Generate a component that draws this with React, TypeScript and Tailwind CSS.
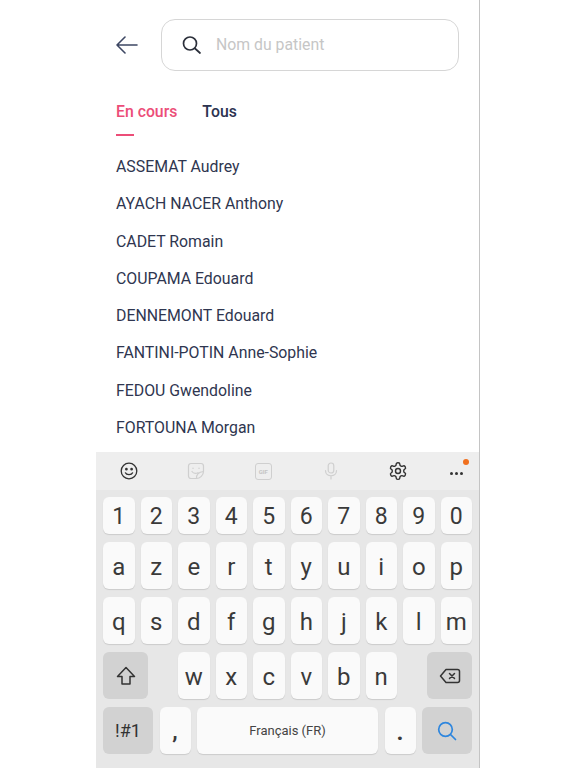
import React from 'react';

const names = [
  'ASSEMAT Audrey',
  'AYACH NACER Anthony',
  'CADET Romain',
  'COUPAMA Edouard',
  'DENNEMONT Edouard',
  'FANTINI-POTIN Anne-Sophie',
  'FEDOU Gwendoline',
  'FORTOUNA Morgan',
];

const Key = ({ label, className = '' }: { label: React.ReactNode; className?: string }) => (
  <div className={`flex justify-center rounded-[6px] bg-[#fafafa] text-[#3a3a3a] shadow-[0_1px_1px_rgba(0,0,0,0.12)] ${className}`}>
    {label}
  </div>
);

const ActionKey = ({ label, className = '' }: { label: React.ReactNode; className?: string }) => (
  <div className={`flex h-[47px] items-center justify-center rounded-[6px] bg-[#d2d2d2] text-[#333] ${className}`}>
    {label}
  </div>
);

const LetterRow = ({ keys }: { keys: string[] }) => (
  <div className="grid grid-cols-10 gap-x-[6px]">
    {keys.map(k => (
      <Key key={k} label={k} className="h-[47px] items-center pt-[2px] text-[24px]" />
    ))}
  </div>
);

const App: React.FC = () => {
  return (
    <div className="flex h-[768px] w-[576px] overflow-hidden bg-white font-['Roboto',sans-serif]">
      <div className="w-[96px] shrink-0" />
      <div className="flex h-full w-[384px] shrink-0 flex-col border-r border-[#c4c4c4]">
        {/* Search header */}
        <div className="flex items-center px-[20px] pt-[19px]">
          <svg width="24" height="20" viewBox="0 0 24 20" fill="none" stroke="#3d4763" strokeWidth="1.6" strokeLinecap="round" strokeLinejoin="round">
            <path d="M21 10H1M9 2l-8 8 8 8" />
          </svg>
          <div className="ml-[21px] flex h-[52px] flex-1 items-center rounded-[14px] border-[1.5px] border-[#d6d6d6] pl-[20px]">
            <svg width="20" height="20" viewBox="0 0 20 20" fill="none" stroke="#2b2f3a" strokeWidth="1.7" strokeLinecap="round">
              <circle cx="8" cy="8.500" r="6.500" />
              <path d="M13 13.500 18 18" />
            </svg>
            <span className="ml-[14px] text-[15.8px] text-[#c6c6c6]">Nom du patient</span>
          </div>
        </div>

        {/* Tabs */}
        <div className="flex gap-[25px] pl-[20px] pt-[30px]">
          <div className="flex flex-col">
            <span className="text-[15.800px] leading-[22px] font-medium text-[#ec4d78]">En cours</span>
            <div className="mt-[11px] h-[2px] w-[18px] bg-[#ec4d78]" />
          </div>
          <span className="text-[15.800px] leading-[22px] font-medium text-[#2c3350]">Tous</span>
        </div>

        {/* Patients */}
        <div className="flex flex-col gap-[15.300px] pl-[20px] pt-[20px]">
          {names.map(n => (
            <div key={n} className="text-[15.850px] leading-[22px] text-[#2f3650]">{n}</div>
          ))}
        </div>

        {/* Keyboard */}
        <div className="mt-auto h-[316px] bg-[#e7e7e7]">
          <div className="flex h-[38px] items-center bg-[#eeeeee]">
            <div className="flex w-[66px] justify-center">
              <svg width="18" height="18" viewBox="0 0 18 18" fill="none" stroke="#333" strokeWidth="1.300" strokeLinecap="round">
                <circle cx="9" cy="9" r="7.800" />
                <circle cx="6.400" cy="7.200" r=".7" fill="#333" />
                <circle cx="11.600" cy="7.200" r=".7" fill="#333" />
                <path d="M5.400 10.800c1 2.400 6.200 2.400 7.200 0" />
              </svg>
            </div>
            <div className="flex w-[67.500px] justify-center">
              <svg width="18" height="18" viewBox="0 0 18 18" fill="none" stroke="#cfcfcf" strokeWidth="1.200" strokeLinejoin="round" strokeLinecap="round">
                <path d="M4 1.500h10A2.500 2.500 0 0 1 16.500 4v5.500c0 3.500-3.500 7-7 7H4A2.500 2.500 0 0 1 1.500 14V4A2.500 2.500 0 0 1 4 1.500Z" />
                <path d="M5 9.500c1.200 1.800 3.500 2.200 6 1.200M9.500 16.500c-.5-3.500 2-6.500 7-7M6 6v.5M12 6v.5" />
              </svg>
            </div>
            <div className="flex w-[67.500px] justify-center">
              <div className="flex h-[17px] w-[17px] items-center justify-center rounded-[3px] border-[1.500px] border-[#cfcfcf] text-[6px] font-bold text-[#c4c4c4]">GIF</div>
            </div>
            <div className="flex w-[67.500px] justify-center">
              <svg width="14" height="18" viewBox="0 0 14 18" fill="none" stroke="#cfcfcf" strokeWidth="1.200" strokeLinecap="round">
                <rect x="4.200" y="1" width="5.600" height="10" rx="2.800" />
                <path d="M1.500 8.500c0 7 11 7 11 0M7 14.500V17" />
              </svg>
            </div>
            <div className="flex w-[67.500px] justify-center">
              <svg width="20" height="20" viewBox="0 0 24 24" fill="none" stroke="#333" strokeWidth="1.700" strokeLinecap="round" strokeLinejoin="round">
                <path d="M12.220 2h-.44a2 2 0 0 0-2 2v.18a2 2 0 0 1-1 1.730l-.43.250a2 2 0 0 1-2 0l-.15-.08a2 2 0 0 0-2.730.730l-.22.380a2 2 0 0 0 .730 2.730l.15.100a2 2 0 0 1 1 1.720v.510a2 2 0 0 1-1 1.740l-.15.090a2 2 0 0 0-.730 2.730l.22.380a2 2 0 0 0 2.730.730l.15-.08a2 2 0 0 1 2 0l.43.250a2 2 0 0 1 1 1.730V20a2 2 0 0 0 2 2h.44a2 2 0 0 0 2-2v-.18a2 2 0 0 1 1-1.730l.43-.250a2 2 0 0 1 2 0l.15.080a2 2 0 0 0 2.730-.730l.22-.390a2 2 0 0 0-.730-2.730l-.15-.080a2 2 0 0 1-1-1.740v-.500a2 2 0 0 1 1-1.740l.15-.090a2 2 0 0 0 .730-2.730l-.22-.380a2 2 0 0 0-2.730-.730l-.15.080a2 2 0 0 1-2 0l-.43-.250a2 2 0 0 1-1-1.730V4a2 2 0 0 0-2-2z" />
                <circle cx="12" cy="12" r="3" />
              </svg>
            </div>
            <div className="relative ml-[18px] flex h-[18px] w-[16px] items-center gap-[2px] pt-[4px]">
              <div className="h-[3px] w-[3px] rounded-full bg-[#333]" />
              <div className="h-[3px] w-[3px] rounded-full bg-[#333]" />
              <div className="h-[3px] w-[3px] rounded-full bg-[#333]" />
              <div className="absolute right-[-3px] top-[-3px] h-[6px] w-[6px] rounded-full bg-[#f0701e]" />
            </div>
          </div>

          <div className="flex flex-col gap-y-[8px] px-[7px] pt-[7px]">
            <div className="grid grid-cols-10 gap-x-[6px]">
              {['1', '2', '3', '4', '5', '6', '7', '8', '9', '0'].map(k => (
                <Key key={k} label={k} className="h-[37px] items-center pt-[3px] text-[23px]" />
              ))}
            </div>
            <LetterRow keys={['a', 'z', 'e', 'r', 't', 'y', 'u', 'i', 'o', 'p']} />
            <LetterRow keys={['q', 's', 'd', 'f', 'g', 'h', 'j', 'k', 'l', 'm']} />

            <div className="flex justify-between">
              <ActionKey
                className="w-[45px]"
                label={
                  <svg width="20" height="20" viewBox="0 0 20 20" fill="none" stroke="#333" strokeWidth="1.500" strokeLinejoin="round">
                    <path d="M10 1.500 1.500 10.500h4.500V18h8v-7.500h4.500Z" />
                  </svg>
                }
              />
              <div className="flex gap-x-[6px]">
                {['w', 'x', 'c', 'v', 'b', 'n'].map(k => (
                  <Key key={k} label={k} className="h-[47px] w-[31.500px] items-center pt-[2px] text-[24px]" />
                ))}
              </div>
              <ActionKey
                className="w-[45px]"
                label={
                  <svg width="22" height="16" viewBox="0 0 22 16" fill="none" stroke="#333" strokeWidth="1.500" strokeLinejoin="round" strokeLinecap="round">
                    <path d="M7 1.500h11.500a2 2 0 0 1 2 2v9a2 2 0 0 1-2 2H7L1.500 8Z" />
                    <path d="m10.500 5.500 5 5M15.500 5.500l-5 5" />
                  </svg>
                }
              />
            </div>

            <div className="flex gap-x-[6.500px]">
              <ActionKey label="!#1" className="w-[50px] text-[18px]" />
              <Key label="," className="h-[47px] w-[31px] items-end pb-[6px] text-[22px] font-bold" />
              <Key label="Français (FR)" className="h-[47px] flex-1 items-center text-[13px] text-[#444]" />
              <Key label="." className="h-[47px] w-[31px] items-end pb-[4px] text-[24px] font-bold" />
              <ActionKey
                className="w-[50px]"
                label={
                  <svg width="20" height="20" viewBox="0 0 20 20" fill="none" stroke="#2e86de" strokeWidth="1.700" strokeLinecap="round">
                    <circle cx="8.500" cy="8.500" r="6.800" />
                    <path d="m13.500 13.500 5 5" />
                  </svg>
                }
              />
            </div>
          </div>
        </div>
      </div>
    </div>
  );
};

export default App;
